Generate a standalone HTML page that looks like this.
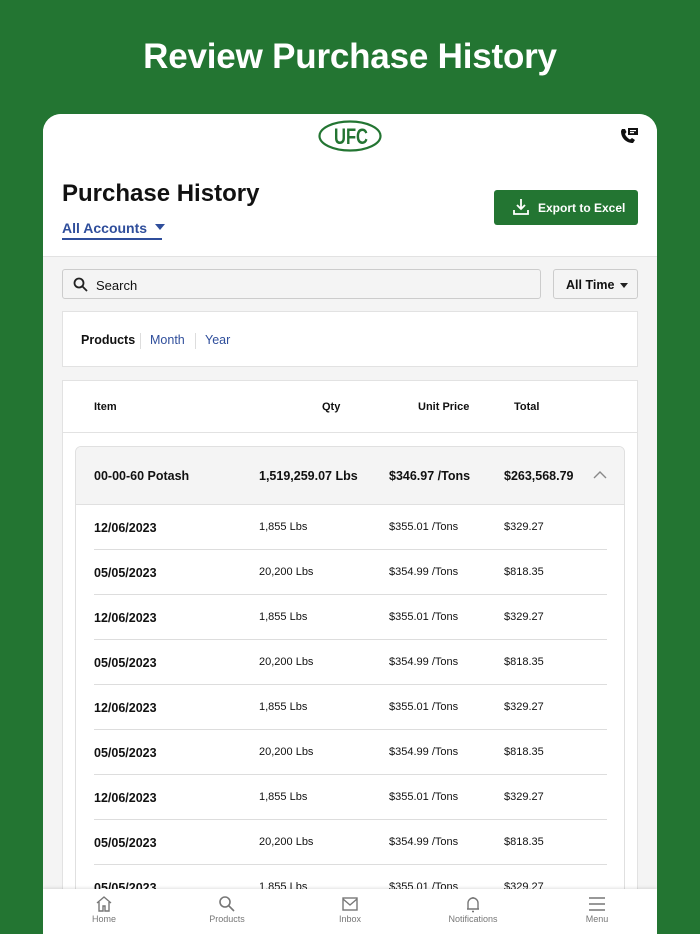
<!DOCTYPE html>
<html><head><meta charset="utf-8"><style>
*{box-sizing:border-box;margin:0;padding:0}
body{width:700px;height:934px;overflow:hidden;background:#237532;font-family:"Liberation Sans",Arial,sans-serif;position:relative;color:#111}
.abs{position:absolute}
h1{position:absolute;top:37px;left:0;width:700px;text-align:center;color:#fff;font-size:35px;font-weight:bold;letter-spacing:-0.2px}
.card{position:absolute;left:43px;top:114px;width:614px;height:820px;background:#f4f4f4;border-radius:18px 18px 0 0;overflow:hidden}
.top{position:absolute;left:0;top:0;width:614px;height:143px;background:#fff;border-bottom:1px solid #e2e2e2}
.btn{position:absolute;left:451px;top:76px;width:144px;height:35px;background:#237532;border-radius:3px;color:#fff;font-size:12px;font-weight:bold}
.search{position:absolute;left:19px;top:155px;width:479px;height:30px;border:1px solid #ccc;border-radius:3px;background:#f4f4f4;font-size:13px}
.all{position:absolute;left:510px;top:155px;width:85px;height:30px;border:1px solid #ccc;border-radius:3px;font-size:12.5px;font-weight:bold}
.tabs{position:absolute;left:19px;top:197px;width:576px;height:56px;background:#fff;border:1px solid #e2e2e2;font-size:12.5px}
.tbl{position:absolute;left:19px;top:266px;width:576px;height:554px;background:#fff;border:1px solid #e2e2e2;overflow:hidden}
.th{font-size:11px;font-weight:bold;position:absolute;top:20px}
.grp{position:absolute;left:12px;top:65px;width:550px;height:520px;background:#fff;border:1px solid #e0e0e0;border-radius:6px 6px 0 0;overflow:hidden}
.gh{position:absolute;left:0;top:0;width:550px;height:58px;background:#f4f4f4;border-bottom:1px solid #e0e0e0;font-weight:bold;font-size:12.5px}
.row{position:absolute;left:18px;width:513px;height:45px;border-bottom:1px solid #ddd;font-size:11px}
.row span{position:absolute;top:16px}
.row .d{font-size:12.5px;font-weight:bold;left:0;top:16px}
.nav{position:absolute;left:0;top:775px;width:614px;height:45px;background:#fff;box-shadow:0 -1px 3px rgba(0,0,0,.12)}
.ni{position:absolute;top:6px;width:80px;text-align:center;font-size:9px;color:#777}
.ni svg{display:block;margin:0 auto 1px}
</style></head><body>
<h1>Review Purchase History</h1>
<div class="card">
 <div class="top">
  <svg class="abs" style="left:275px;top:6px" width="64" height="32" viewBox="0 0 64 32"><ellipse cx="32" cy="16" rx="30.5" ry="14.5" fill="#fff" stroke="#237532" stroke-width="2.2"/><text x="33" y="24" text-anchor="middle" font-family="Liberation Sans" font-weight="bold" font-size="22" fill="#237532" textLength="34" lengthAdjust="spacingAndGlyphs">UFC</text></svg>
  <svg class="abs" style="left:576px;top:13px" width="20" height="18" viewBox="0 0 20 18"><path d="M2 4c0 7 5 12 12 12l2-3-3-2-2 1.5C8.5 11 7 9.5 6 7l1.5-2L6 2 3 2z" fill="#111"/><rect x="9" y="1" width="10" height="7" fill="#111"/><rect x="11" y="3" width="6" height="1.2" fill="#fff"/><rect x="11" y="5" width="4" height="1.2" fill="#fff"/></svg>
  <div class="abs" style="left:19px;top:66px;font-size:24px;font-weight:bold">Purchase History</div>
  <div class="abs" style="left:19px;top:106px;font-size:14px;font-weight:bold;color:#2f4e9b">All Accounts <span style="display:inline-block;border-left:5px solid transparent;border-right:5px solid transparent;border-top:6px solid #2f4e9b;margin-left:4px;vertical-align:3px"></span></div>
  <div class="abs" style="left:19px;top:124px;width:100px;height:2px;background:#2f4e9b"></div>
  <div class="btn"><svg class="abs" style="left:18px;top:8px" width="18" height="18" viewBox="0 0 18 18" fill="none" stroke="#fff" stroke-width="1.8"><path d="M9 1v10M5 7l4 4 4-4M2 12v4h14v-4"/></svg><span class="abs" style="left:44px;top:11px">Export to Excel</span></div>
 </div>
 <div class="search"><svg class="abs" style="left:10px;top:7px" width="15" height="15" viewBox="0 0 15 15" fill="none" stroke="#222" stroke-width="1.8"><circle cx="6" cy="6" r="4.5"/><path d="M9.5 9.5l4.5 4.5"/></svg><span class="abs" style="left:33px;top:8px">Search</span></div>
 <div class="all"><span class="abs" style="left:12px;top:8px">All Time</span><span class="abs" style="left:66px;top:13px;border-left:4px solid transparent;border-right:4px solid transparent;border-top:5px solid #222"></span></div>
 <div class="tabs"><span class="abs" style="left:18px;top:21px;font-weight:bold">Products</span><span class="abs" style="left:77px;top:21px;height:16px;border-left:1px solid #ddd"></span><span class="abs" style="left:87px;top:21px;color:#2f4e9b">Month</span><span class="abs" style="left:132px;top:21px;height:16px;border-left:1px solid #ddd"></span><span class="abs" style="left:142px;top:21px;color:#2f4e9b">Year</span></div>
 <div class="tbl">
  <span class="th" style="left:31px">Item</span><span class="th" style="left:259px">Qty</span><span class="th" style="left:355px">Unit Price</span><span class="th" style="left:451px">Total</span>
  <div class="abs" style="left:0;top:51px;width:574px;border-top:1px solid #e2e2e2"></div>
  <div class="grp">
   <div class="gh"><span class="abs" style="left:18px;top:22px">00-00-60 Potash</span><span class="abs" style="left:183px;top:22px">1,519,259.07 Lbs</span><span class="abs" style="left:313px;top:22px">$346.97 /Tons</span><span class="abs" style="left:428px;top:22px">$263,568.79</span><svg class="abs" style="left:517px;top:23px" width="14" height="9" viewBox="0 0 14 9" fill="none" stroke="#888" stroke-width="1.4"><path d="M1 8l6-6 6 6"/></svg></div>
   <div class="row" style="top:58px"><span class="d">12/06/2023</span><span style="left:165px">1,855 Lbs</span><span style="left:295px">$355.01 /Tons</span><span style="left:410px">$329.27</span></div>
   <div class="row" style="top:103px"><span class="d">05/05/2023</span><span style="left:165px">20,200 Lbs</span><span style="left:295px">$354.99 /Tons</span><span style="left:410px">$818.35</span></div>
   <div class="row" style="top:148px"><span class="d">12/06/2023</span><span style="left:165px">1,855 Lbs</span><span style="left:295px">$355.01 /Tons</span><span style="left:410px">$329.27</span></div>
   <div class="row" style="top:193px"><span class="d">05/05/2023</span><span style="left:165px">20,200 Lbs</span><span style="left:295px">$354.99 /Tons</span><span style="left:410px">$818.35</span></div>
   <div class="row" style="top:238px"><span class="d">12/06/2023</span><span style="left:165px">1,855 Lbs</span><span style="left:295px">$355.01 /Tons</span><span style="left:410px">$329.27</span></div>
   <div class="row" style="top:283px"><span class="d">05/05/2023</span><span style="left:165px">20,200 Lbs</span><span style="left:295px">$354.99 /Tons</span><span style="left:410px">$818.35</span></div>
   <div class="row" style="top:328px"><span class="d">12/06/2023</span><span style="left:165px">1,855 Lbs</span><span style="left:295px">$355.01 /Tons</span><span style="left:410px">$329.27</span></div>
   <div class="row" style="top:373px"><span class="d">05/05/2023</span><span style="left:165px">20,200 Lbs</span><span style="left:295px">$354.99 /Tons</span><span style="left:410px">$818.35</span></div>
   <div class="row" style="top:418px"><span class="d">05/05/2023</span><span style="left:165px">1,855 Lbs</span><span style="left:295px">$355.01 /Tons</span><span style="left:410px">$329.27</span></div>
  </div>
 </div>
 <div class="nav">
  <div class="ni" style="left:21px"><svg width="18" height="18" viewBox="0 0 18 18" fill="none" stroke="#777" stroke-width="1.4"><path d="M2 8l7-6 7 6M4 7v9h4v-5h2v5h4V7"/></svg>Home</div>
  <div class="ni" style="left:144px"><svg width="18" height="18" viewBox="0 0 18 18" fill="none" stroke="#777" stroke-width="1.6"><circle cx="7" cy="7" r="5"/><path d="M11 11l5 5"/></svg>Products</div>
  <div class="ni" style="left:267px"><svg width="18" height="18" viewBox="0 0 18 18" fill="none" stroke="#777" stroke-width="1.4"><rect x="2" y="3" width="14" height="12"/><path d="M2 4l7 6 7-6"/></svg>Inbox</div>
  <div class="ni" style="left:390px"><svg width="18" height="18" viewBox="0 0 18 18" fill="none" stroke="#777" stroke-width="1.4"><path d="M4 14V8a5 5 0 0 1 10 0v6H3h12M8 16.5h2M9 2v1"/></svg>Notifications</div>
  <div class="ni" style="left:514px"><svg width="18" height="18" viewBox="0 0 18 18" fill="none" stroke="#777" stroke-width="1.4"><path d="M1 3h16M1 9h16M1 15h16"/></svg>Menu</div>
 </div>
</div>
</body></html>
